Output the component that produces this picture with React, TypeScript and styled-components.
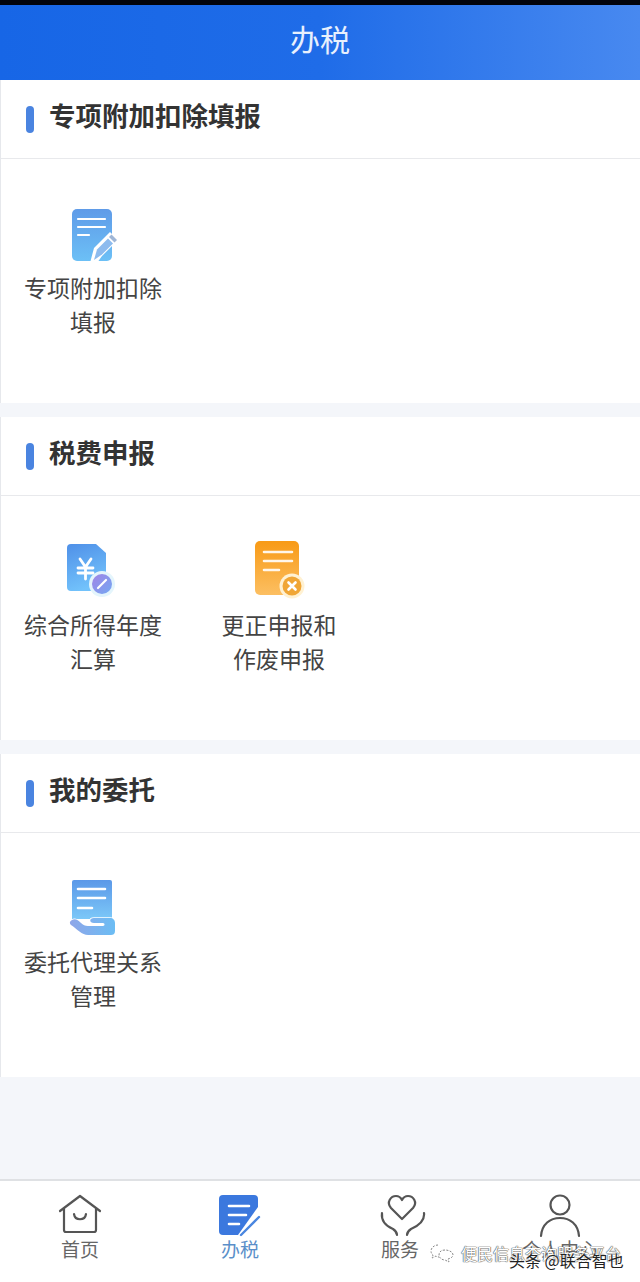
import React from "react";
import styled, { createGlobalStyle } from "styled-components";

const FONT = `"Noto Sans CJK SC", "Noto Sans", sans-serif`;

const GlobalStyle = createGlobalStyle`
  html, body {
    margin: 0;
    padding: 0;
    background: #f4f6fa;
    font-family: ${FONT};
  }
  * {
    box-sizing: border-box;
  }
`;

const NoteIcon = () => (
  <svg width="52" height="60" viewBox="0 0 52 60">
    <defs>
      <linearGradient id="noteBlue" x1="0" y1="0" x2="0" y2="1">
        <stop offset="0" stopColor="#5f9be8" />
        <stop offset="1" stopColor="#6cc0f6" />
      </linearGradient>
    </defs>
    <rect x="5" y="6" width="40" height="52" rx="5" fill="url(#noteBlue)" />
    <path d="M11 16H38M11 24H38M11 32H22" stroke="#fff" strokeWidth="2.2" strokeLinecap="round" />
    <path d="M23 60L27 45L43 29L51 37L35 53L30 60Z" fill="#fff" />
    <path d="M27 57L30 46.5L41 35.5L46 40.5L35 51.5Z" fill="#8dbbee" />
    <path d="M44.5 31.5L50 37L47.5 39.5L42 34Z" fill="#9fb6d6" />
  </svg>
);

const YuanIcon = () => (
  <svg width="52" height="60" viewBox="0 0 52 60">
    <defs>
      <linearGradient id="yuanBlue" x1="0" y1="0" x2="0.3" y2="1">
        <stop offset="0" stopColor="#4f90e8" />
        <stop offset="1" stopColor="#72c2fb" />
      </linearGradient>
      <linearGradient id="yuanBadge" x1="0" y1="0" x2="1" y2="1">
        <stop offset="0" stopColor="#a184e6" />
        <stop offset="1" stopColor="#74a8f2" />
      </linearGradient>
    </defs>
    <path d="M4 4H29L39 13V47a4 4 0 0 1-4 4H4a4 4 0 0 1-4-4V8a4 4 0 0 1 4-4Z" fill="url(#yuanBlue)" />
    <path
      d="M13 19L18.5 27L24 19M11 28H26M11 33H26M18.5 27V39"
      fill="none"
      stroke="#fff"
      strokeWidth="2.8"
      strokeLinecap="round"
    />
    <circle cx="35" cy="44" r="13" fill="#e4f5fc" />
    <circle cx="35" cy="44" r="10" fill="url(#yuanBadge)" />
    <path d="M31 48L39 40" stroke="#fff" strokeWidth="2.2" strokeLinecap="round" />
  </svg>
);

const FixIcon = () => (
  <svg width="52" height="60" viewBox="0 0 52 60">
    <defs>
      <linearGradient id="fixOrange" x1="0" y1="0" x2="0" y2="1">
        <stop offset="0" stopColor="#f89a16" />
        <stop offset="1" stopColor="#fcbf62" />
      </linearGradient>
    </defs>
    <rect x="2" y="1" width="44" height="54" rx="5" fill="url(#fixOrange)" />
    <path d="M11 12H39M11 21H39M11 30H26" stroke="#fff" strokeOpacity="0.9" strokeWidth="2.6" strokeLinecap="round" />
    <circle cx="39" cy="46" r="12.5" fill="#fff1d2" />
    <circle cx="39" cy="46" r="9.5" fill="#f0a636" />
    <path d="M35.5 42.5L42.5 49.5M42.5 42.5L35.5 49.5" stroke="#fff" strokeWidth="2.6" strokeLinecap="round" />
  </svg>
);

const HandIcon = () => (
  <svg width="52" height="60" viewBox="0 0 52 60">
    <defs>
      <linearGradient id="handDoc" x1="0" y1="0" x2="0" y2="1">
        <stop offset="0" stopColor="#5b98e8" />
        <stop offset="1" stopColor="#7cc8f8" />
      </linearGradient>
      <linearGradient id="handPalm" x1="0" y1="0" x2="1" y2="0">
        <stop offset="0" stopColor="#8fa6e8" />
        <stop offset="1" stopColor="#6bbdf4" />
      </linearGradient>
    </defs>
    <path d="M7 3H43a2 2 0 0 1 2 2V42H5V5a2 2 0 0 1 2-2Z" fill="url(#handDoc)" />
    <path d="M11 12H38M11 21H38M11 31H25" stroke="#fff" strokeWidth="2.6" strokeLinecap="round" />
    <path
      d="M5 43C8 41 11 43 14 46C16 48 18 49 21 49H36C38 49 38 46 36 46H27C22 46 22 41 27 41H43C46 41 48 43 48 46V54C48 57 46 58 44 58H21C15 58 10 52 4 48C2 46 3 44 5 43Z"
      fill="url(#handPalm)"
      stroke="#fff"
      strokeWidth="1.5"
      paintOrder="stroke"
    />
  </svg>
);

const HomeTabIcon = () => (
  <svg width="44" height="42" viewBox="0 0 44 42">
    <path
      d="M2 17L22 2L42 17M6 14V36a2 2 0 0 0 2 2H36a2 2 0 0 0 2-2V14"
      fill="none"
      stroke="#555"
      strokeWidth="2.2"
      strokeLinecap="round"
      strokeLinejoin="round"
    />
    <path d="M16 20C17 27 27 27 28 20" fill="none" stroke="#555" strokeWidth="2.2" strokeLinecap="round" />
  </svg>
);

const TaxTabIcon = () => (
  <svg width="44" height="44" viewBox="0 0 44 44">
    <path d="M5 1H36a4 4 0 0 1 4 4V13L20 41H5a4 4 0 0 1-4-4V5a4 4 0 0 1 4-4Z" fill="#3b78de" />
    <path d="M11 12H31M11 21H28M11 30H21" stroke="#fff" strokeWidth="2.6" strokeLinecap="round" />
    <path d="M23 41L41 23" stroke="#4a86e0" strokeWidth="2.4" strokeLinecap="round" />
  </svg>
);

const ServiceTabIcon = () => (
  <svg width="52" height="46" viewBox="0 0 52 46">
    <path
      d="M28 25L17 14C12 8 17 2 22 2C25 2 27 4 28 6C29 4 31 2 34 2C39 2 44 8 39 14Z"
      fill="none"
      stroke="#555"
      strokeWidth="2.2"
      strokeLinejoin="round"
    />
    <path d="M8 19C7 27 12 32 19 35C22 37 23 38 23 41" fill="none" stroke="#555" strokeWidth="2.2" strokeLinecap="round" />
    <path d="M50 19C51 27 44 32 37 35C34 37 33 38 33 41" fill="none" stroke="#555" strokeWidth="2.2" strokeLinecap="round" />
  </svg>
);

const PersonTabIcon = () => (
  <svg width="44" height="46" viewBox="0 0 44 46">
    <circle cx="22" cy="11" r="9.5" fill="none" stroke="#555" strokeWidth="2.2" />
    <path d="M3 42C4 30 12 24 22 24C32 24 40 30 41 42" fill="none" stroke="#555" strokeWidth="2.2" strokeLinecap="round" />
  </svg>
);

const WechatMark = () => (
  <svg width="24" height="20" viewBox="0 0 24 20">
    <path
      d="M8 2C4 2 1 5 1 8C1 10 2 11 3 12L2 15L6 13C7 14 8 14 9 14"
      fill="none"
      stroke="#888"
      strokeWidth="1"
      strokeDasharray="2 1.5"
    />
    <path
      d="M15 7C11 7 9 9 9 12C9 15 12 17 15 17L19 19L18 16C21 15 23 14 23 12C23 9 19 7 15 7Z"
      fill="none"
      stroke="#888"
      strokeWidth="1"
      strokeDasharray="2 1.5"
    />
  </svg>
);

const sections = [
  {
    title: "专项附加扣除填报",
    items: [{ lines: ["专项附加扣除", "填报"], icon: <NoteIcon /> }],
  },
  {
    title: "税费申报",
    items: [
      { lines: ["综合所得年度", "汇算"], icon: <YuanIcon /> },
      { lines: ["更正申报和", "作废申报"], icon: <FixIcon /> },
    ],
  },
  {
    title: "我的委托",
    items: [{ lines: ["委托代理关系", "管理"], icon: <HandIcon /> }],
  },
];

const tabs = [
  { label: "首页", icon: <HomeTabIcon /> },
  { label: "办税", icon: <TaxTabIcon />, active: true },
  { label: "服务", icon: <ServiceTabIcon /> },
  { label: "个人中心", icon: <PersonTabIcon /> },
];

export default function App() {
  return (
    <>
      <GlobalStyle />
      <Page>
        <StatusStrip />
        <Header>办税</Header>
        <SectionList>
          {sections.map((section) => (
            <Section key={section.title}>
              <SectionHead>
                <SectionMark />
                <SectionTitle>{section.title}</SectionTitle>
              </SectionHead>
              <ItemGrid>
                {section.items.map((item) => (
                  <Item key={item.lines[0]}>
                    <ItemIcon>{item.icon}</ItemIcon>
                    <ItemLabel>
                      {item.lines.map((line) => (
                        <div key={line}>{line}</div>
                      ))}
                    </ItemLabel>
                  </Item>
                ))}
              </ItemGrid>
            </Section>
          ))}
        </SectionList>
        <TabBar>
          {tabs.map((tab) => (
            <Tab key={tab.label}>
              <TabIcon>{tab.icon}</TabIcon>
              <TabLabel $active={tab.active}>{tab.label}</TabLabel>
            </Tab>
          ))}
        </TabBar>
        <Watermark>
          <WechatMark />
          <span>便民信息查询服务平台</span>
        </Watermark>
        <WatermarkToutiao>头条 @联合智也</WatermarkToutiao>
      </Page>
    </>
  );
}

const Page = styled.div`
  position: relative;
  width: 640px;
  height: 1282px;
  display: flex;
  flex-direction: column;
  overflow: hidden;
  background: #f4f6fa;
`;

const StatusStrip = styled.div`
  height: 5px;
  background: #02040c;
`;

const Header = styled.header`
  height: 75px;
  display: flex;
  align-items: center;
  justify-content: center;
  padding-bottom: 10px;
  background: linear-gradient(90deg, #1766e6 0%, #1f6ce8 50%, #4889f0 100%);
  color: #e8f0fd;
  font-size: 30px;
  line-height: 1;
`;

const SectionList = styled.main`
  flex: 1;
  display: flex;
  flex-direction: column;
  gap: 14px;
`;

const Section = styled.section`
  height: 323px;
  background: #fff;
  border-left: 1px solid #e6e8ec;
`;

const SectionHead = styled.div`
  height: 79px;
  display: flex;
  align-items: center;
  gap: 15px;
  padding-left: 25px;
  border-bottom: 1px solid #e8e9ec;
`;

const SectionMark = styled.span`
  width: 8px;
  height: 27px;
  border-radius: 4px;
  background: #4a84e0;
`;

const SectionTitle = styled.h2`
  margin: 0 0 7px;
  font-size: 26.5px;
  line-height: 1;
  font-weight: 700;
  color: #333;
`;

const ItemGrid = styled.div`
  display: grid;
  grid-template-columns: 186px 186px;
  margin-left: -1px;
  padding-top: 44px;
`;

const Item = styled.div`
  display: flex;
  flex-direction: column;
  align-items: center;
`;

const ItemIcon = styled.div`
  height: 60px;
  display: flex;
  align-items: flex-start;
  justify-content: center;
`;

const ItemLabel = styled.div`
  margin-top: 8px;
  font-size: 23px;
  line-height: 33.5px;
  color: #444;
  text-align: center;
  white-space: nowrap;
`;

const TabBar = styled.nav`
  height: 103px;
  display: grid;
  grid-template-columns: repeat(4, 160px);
  background: #fff;
  border-top: 2px solid #dfe1e4;
`;

const Tab = styled.div`
  display: flex;
  flex-direction: column;
  align-items: center;
  padding-top: 13px;
`;

const TabIcon = styled.div`
  height: 46px;
  display: flex;
  align-items: flex-start;
  justify-content: center;
`;

const TabLabel = styled.span<{ $active?: boolean }>`
  font-size: 19px;
  line-height: 26px;
  margin-top: -4px;
  color: ${(p) => (p.$active ? "#5b8fc9" : "#666")};
`;

const Watermark = styled.div`
  position: absolute;
  left: 430px;
  top: 1243px;
  display: flex;
  align-items: center;
  gap: 7px;
  font-size: 16px;
  line-height: 20px;
  color: #fff;
  text-shadow: 0 0 1px #555, 0 0 1px #555, 0 0 1px #555;
  white-space: nowrap;
`;

const WatermarkToutiao = styled.div`
  position: absolute;
  left: 509px;
  top: 1250px;
  font-size: 16px;
  line-height: 20px;
  color: #222;
  text-shadow: 0 0 2px #fff, 0 0 1px #fff;
  white-space: nowrap;
`;
